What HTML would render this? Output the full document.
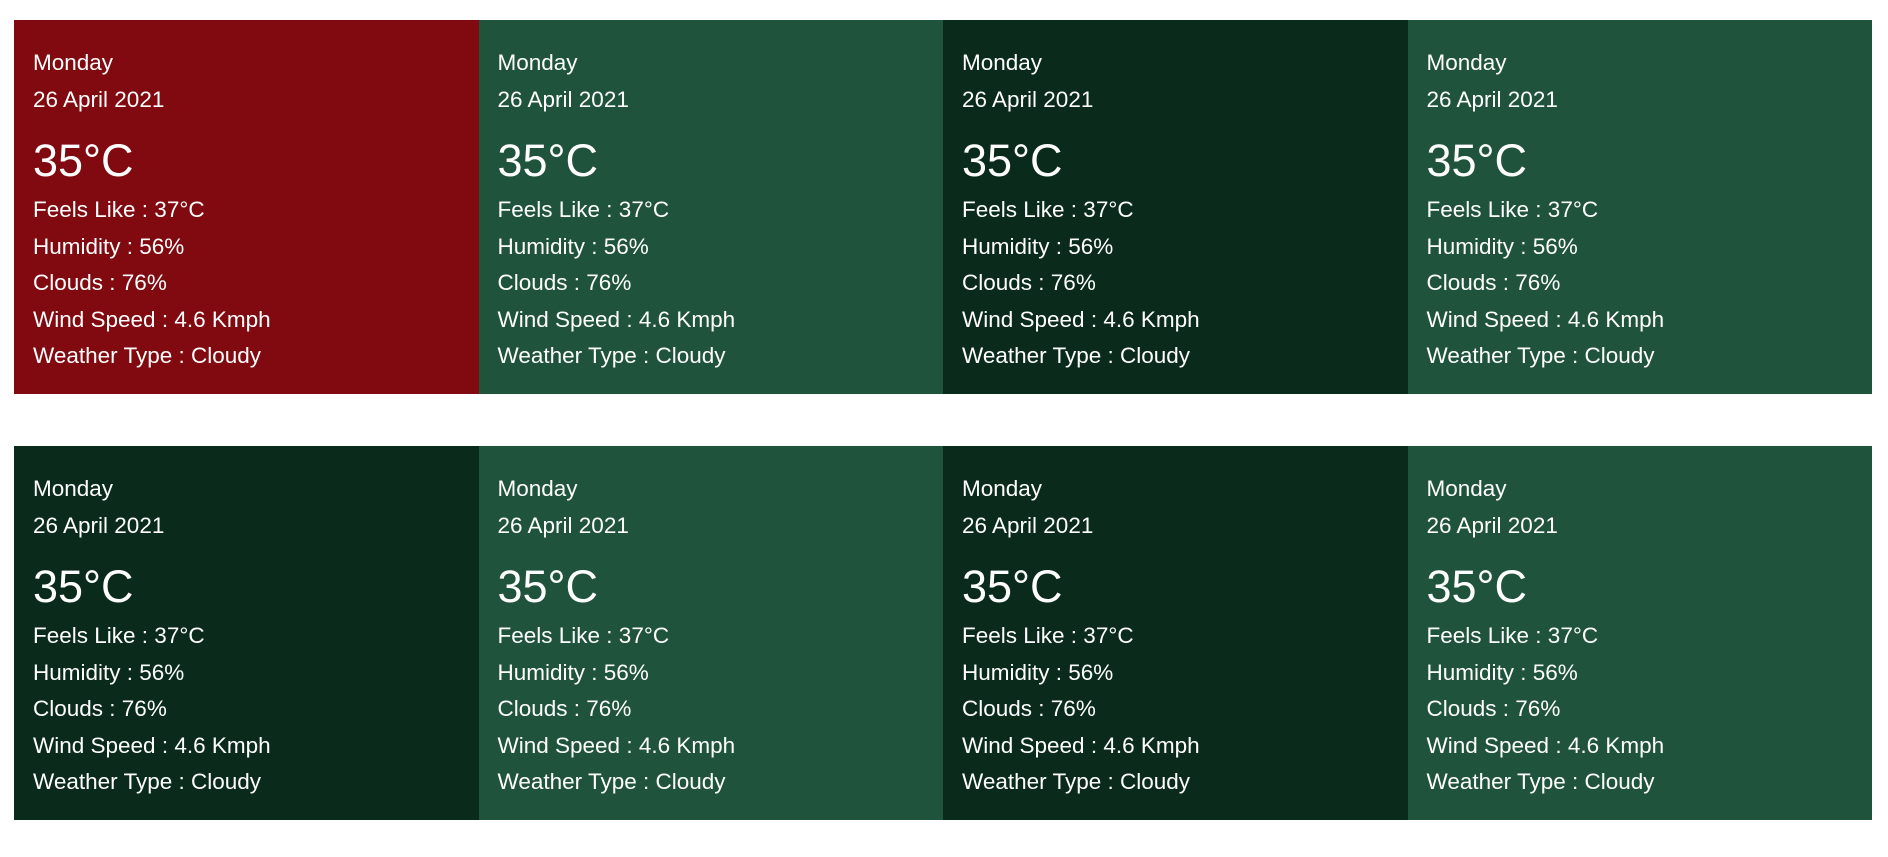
<!DOCTYPE html>
<html><head><style>
body{margin:0;width:1888px;height:857px;background:#fff;font-family:"Liberation Sans",Arial,sans-serif;color:#fff;position:relative;overflow:hidden}
.c{position:absolute;width:464.5px;height:374px}
.c div{position:absolute;left:19px;white-space:nowrap;font-size:22.5px;line-height:36px}
.r{background:#800a10}.g{background:#20533b}.d{background:#0a2a1c}
.c .t{font-size:45px;line-height:52px}
</style></head><body>
<script>
var cols=["r","g","d","g","d","g","d","g"];
var h="";
for(var i=0;i<8;i++){
 var x=14+(i%4)*464.5, y=i<4?20:446;
 h+='<div class="c '+cols[i]+'" style="left:'+x+'px;top:'+y+'px">'+
 '<div style="top:25px">Monday</div>'+
 '<div style="top:62px">26 April 2021</div>'+
 '<div class="t" style="top:115px">35°C</div>'+
 '<div style="top:172px">Feels Like : 37°C</div>'+
 '<div style="top:208.5px">Humidity : 56%</div>'+
 '<div style="top:245px">Clouds : 76%</div>'+
 '<div style="top:281.5px">Wind Speed : 4.6 Kmph</div>'+
 '<div style="top:318px">Weather Type : Cloudy</div></div>';
}
document.write(h);
</script>
</body></html>
